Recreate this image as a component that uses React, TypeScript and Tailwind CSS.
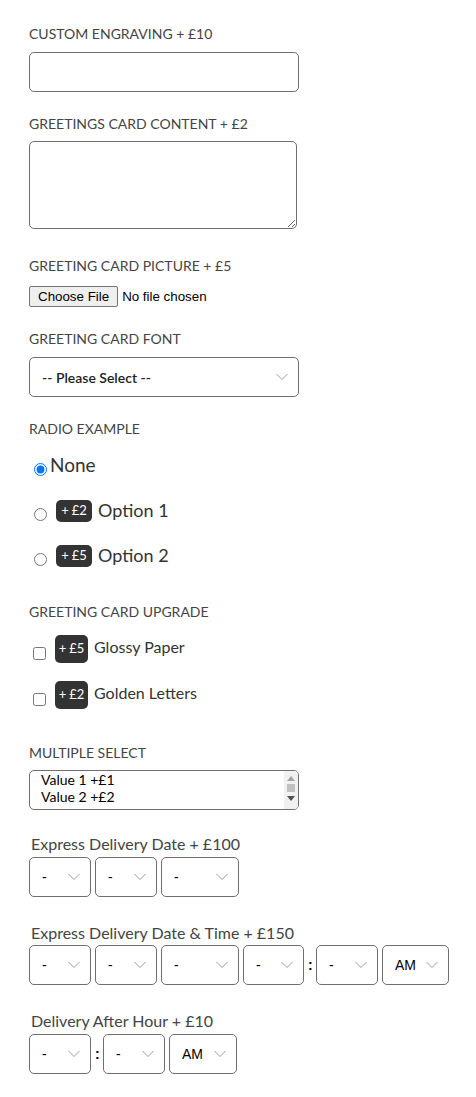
import React from 'react';

const Chevron: React.FC = () => (
    <svg className="pointer-events-none absolute right-[11px] top-1/2 -translate-y-1/2" width="12" height="7" viewBox="0 0 12 7" fill="none">
        <path d="M0.5 0.5 L6 6 L11.5 0.5" stroke="#9a9a9a" strokeWidth="1" />
    </svg>
);

const Label: React.FC<{ children: React.ReactNode; className?: string }> = ({ children, className }) => (
    <p className={`uppercase text-[14px] leading-[20px] text-[#444] ${className ?? ''}`}>{children}</p>
);

const Select: React.FC<{ w: string; value?: string }> = ({ w, value = '-' }) => (
    <div className={`relative ${w}`}>
        <select className="appearance-none w-full h-[40px] border border-[#6f6f6f] rounded-[5px] pl-[12px] bg-white text-[14px] text-black font-['Liberation_Sans',Arial,sans-serif]">
            <option>{value}</option>
        </select>
        <Chevron />
    </div>
);

const Colon: React.FC = () => (
    <span className="w-[4px] text-[14px] font-bold text-black font-['Liberation_Sans',Arial,sans-serif] leading-none">:</span>
);

const Badge: React.FC<{ children: React.ReactNode; tall?: boolean }> = ({ children, tall }) => (
    <span className={`inline-flex items-center justify-center gap-[3px] bg-[#333] text-white rounded-[5px] text-[13px] ${tall ? 'w-[33px] h-[28px]' : 'w-[36px] h-[22px]'}`}>
        {children}
    </span>
);

export default function App() {
    return (
        <main className="min-h-screen bg-white pl-[29px] pt-[24px] font-['Lato','Open_Sans',sans-serif]">
            <Label>Custom Engraving + £10</Label>
            <input type="text" className="block mt-[8px] w-[270px] h-[40px] border border-[#6f6f6f] rounded-[5px]" />

            <Label className="mt-[22px]">Greetings Card Content + £2</Label>
            <textarea className="block mt-[7px] w-[268px] h-[88px] border border-[#6f6f6f] rounded-[5px]" />

            <Label className="mt-[27px]">Greeting Card Picture + £5</Label>
            <input
                type="file"
                className="block mt-[10px] text-[13.33px] text-black font-['Liberation_Sans',Arial,sans-serif] file:mr-[4px] file:px-[8px] file:h-[21px] file:border file:border-[#767676] file:bg-[#efefef] file:rounded-[2px] file:text-black"
            />

            <Label className="mt-[22px]">Greeting Card Font</Label>
            <div className="relative mt-[8px] w-[270px]">
                <select className="appearance-none w-full h-[40px] border border-[#6f6f6f] rounded-[5px] pl-[12px] bg-white text-[14px] font-semibold text-[#222]">
                    <option>-- Please Select --</option>
                </select>
                <Chevron />
            </div>

            <Label className="mt-[22px]">Radio Example</Label>
            <div className="flex flex-col mt-[14px] gap-[19px] text-[#333]">
                <label className="flex items-center h-[26px]">
                    <input type="radio" name="r" defaultChecked className="ml-[5px] mr-[3px] translate-y-[3px]" />
                    <span className="text-[19px] -translate-y-[1px]">None</span>
                </label>
                <label className="flex items-center h-[26px]">
                    <input type="radio" name="r" className="ml-[5px] mr-[9px] translate-y-[3px]" />
                    <Badge><span>+</span><span>£2</span></Badge>
                    <span className="ml-[6px] text-[18px] -translate-y-[1px]">Option 1</span>
                </label>
                <label className="flex items-center h-[26px]">
                    <input type="radio" name="r" className="ml-[5px] mr-[9px] translate-y-[3px]" />
                    <Badge><span>+</span><span>£5</span></Badge>
                    <span className="ml-[6px] text-[18px] -translate-y-[1px]">Option 2</span>
                </label>
            </div>

            <Label className="mt-[33px]">Greeting Card Upgrade</Label>
            <div className="flex flex-col mt-[13px] gap-[18px] text-[#333]">
                <label className="flex items-center h-[28px]">
                    <input type="checkbox" className="ml-[4px] mr-[9px] translate-y-[4px]" />
                    <Badge tall><span>+</span><span>£5</span></Badge>
                    <span className="ml-[6px] text-[16px] -translate-y-[2px]">Glossy Paper</span>
                </label>
                <label className="flex items-center h-[28px]">
                    <input type="checkbox" className="ml-[4px] mr-[9px] translate-y-[4px]" />
                    <Badge tall><span>+</span><span>£2</span></Badge>
                    <span className="ml-[6px] text-[16px] -translate-y-[2px]">Golden Letters</span>
                </label>
            </div>

            <Label className="mt-[34px]">Multiple Select</Label>
            <div className="relative mt-[7px] w-[270px]">
                <select multiple className="block w-full h-[40px] border border-[#6f6f6f] rounded-[5px] pl-[11px] text-[14px] font-semibold text-black">
                    <option>Value 1 +£1</option>
                    <option>Value 2 +£2</option>
                    <option>Value 3 +£4</option>
                </select>
                {/* scrollbar */}
                <div className="pointer-events-none absolute right-[1px] top-[1px] bottom-[1px] w-[14px] bg-[#f1f1f1] rounded-r-[4px] flex flex-col items-center">
                    <svg className="mt-[5px]" width="8" height="5" viewBox="0 0 8 5"><path d="M0 5 L4 0 L8 5 Z" fill="#a3a3a3" /></svg>
                    <div className="mt-[3px] w-[8px] h-[8px] bg-[#c1c1c1]" />
                    <svg className="mt-[4px]" width="8" height="5" viewBox="0 0 8 5"><path d="M0 0 L4 5 L8 0 Z" fill="#505050" /></svg>
                </div>
            </div>

            <p className="mt-[24px] ml-[2px] text-[16px] leading-[20px] text-[#444]">Express Delivery Date + £100</p>
            <div className="flex items-center gap-[4px] mt-[3px]">
                <Select w="w-[62px]" />
                <Select w="w-[62px]" />
                <Select w="w-[78px]" />
            </div>

            <p className="mt-[26px] ml-[2px] text-[16px] leading-[20px] text-[#444]">Express Delivery Date &amp; Time + £150</p>
            <div className="flex items-center gap-[4px] mt-[2px]">
                <Select w="w-[62px]" />
                <Select w="w-[62px]" />
                <Select w="w-[78px]" />
                <Select w="w-[61px]" />
                <Colon />
                <Select w="w-[62px]" />
                <Select w="w-[67px]" value="AM" />
            </div>

            <p className="mt-[26px] ml-[2px] text-[16px] leading-[20px] text-[#444]">Delivery After Hour + £10</p>
            <div className="flex items-center gap-[4px] mt-[3px]">
                <Select w="w-[62px]" />
                <Colon />
                <Select w="w-[62px]" />
                <Select w="w-[68px]" value="AM" />
            </div>
        </main>
    );
}
